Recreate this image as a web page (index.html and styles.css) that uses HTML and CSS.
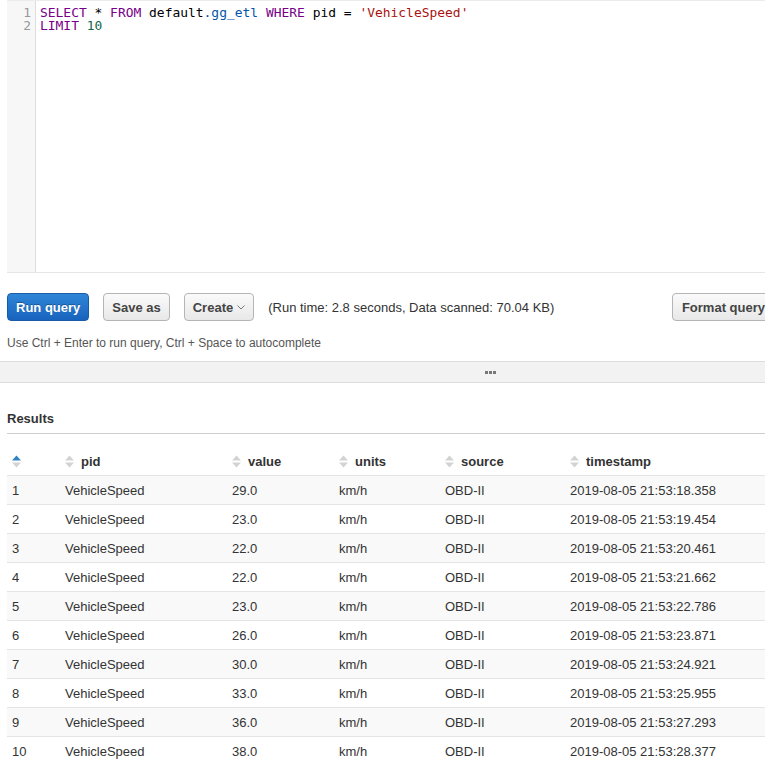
FILE: index.html
```html
<!DOCTYPE html>
<html>
<head>
<meta charset="utf-8">
<link rel="stylesheet" href="styles.css">
</head>
<body>
<div class="page">
  <div class="editor">
    <div class="gutter">
      <div class="ln">1</div>
      <div class="ln">2</div>
    </div>
    <div class="code">
      <div class="line"><span class="kw">SELECT</span> * <span class="kw">FROM</span> default<span class="var">.gg_etl</span> <span class="kw">WHERE</span> pid = <span class="str">'VehicleSpeed'</span></div>
      <div class="line"><span class="kw">LIMIT</span> <span class="num">10</span></div>
    </div>
  </div>

  <div class="toolbar">
    <button class="btn btn-primary">Run query</button>
    <button class="btn">Save as</button>
    <button class="btn">Create <svg class="chev" width="8" height="5" viewBox="0 0 8 5"><polyline points="0.5,0.5 4,4 7.5,0.5" fill="none" stroke="#777" stroke-width="1"/></svg></button>
    <span class="stats">(Run time: 2.8 seconds, Data scanned: 70.04 KB)</span>
    <button class="btn btn-format">Format query</button>
  </div>

  <div class="hint">Use Ctrl + Enter to run query, Ctrl + Space to autocomplete</div>
</div>

<div class="splitter"><svg class="dots" width="11" height="3" viewBox="0 0 11 3"><rect x="0" y="0" width="3" height="3" fill="#777"/><rect x="4" y="0" width="3" height="3" fill="#777"/><rect x="8" y="0" width="3" height="3" fill="#777"/></svg></div>

<div class="results">
  <div class="results-title">Results</div>
  <table class="grid">
    <thead>
      <tr>
        <th class="c-idx"><span class="sort"><svg width="9" height="13" viewBox="0 0 9 13"><polygon points="0,5.5 4.5,0.5 9,5.5" fill="#2f83c5"/><polygon points="0,7.5 4.5,12.5 9,7.5" fill="#d3d3d3"/></svg></span></th>
        <th class="c-pid"><span class="sort"><svg width="9" height="13" viewBox="0 0 9 13"><polygon points="0,5.5 4.5,0.5 9,5.5" fill="#d3d3d3"/><polygon points="0,7.5 4.5,12.5 9,7.5" fill="#d3d3d3"/></svg></span>pid</th>
        <th class="c-val"><span class="sort"><svg width="9" height="13" viewBox="0 0 9 13"><polygon points="0,5.5 4.5,0.5 9,5.5" fill="#d3d3d3"/><polygon points="0,7.5 4.5,12.5 9,7.5" fill="#d3d3d3"/></svg></span>value</th>
        <th class="c-units"><span class="sort"><svg width="9" height="13" viewBox="0 0 9 13"><polygon points="0,5.5 4.5,0.5 9,5.5" fill="#d3d3d3"/><polygon points="0,7.5 4.5,12.5 9,7.5" fill="#d3d3d3"/></svg></span>units</th>
        <th class="c-src"><span class="sort"><svg width="9" height="13" viewBox="0 0 9 13"><polygon points="0,5.5 4.5,0.5 9,5.5" fill="#d3d3d3"/><polygon points="0,7.5 4.5,12.5 9,7.5" fill="#d3d3d3"/></svg></span>source</th>
        <th class="c-ts"><span class="sort"><svg width="9" height="13" viewBox="0 0 9 13"><polygon points="0,5.5 4.5,0.5 9,5.5" fill="#d3d3d3"/><polygon points="0,7.5 4.5,12.5 9,7.5" fill="#d3d3d3"/></svg></span>timestamp</th>
      </tr>
    </thead>
    <tbody>
      <tr><td>1</td><td>VehicleSpeed</td><td>29.0</td><td>km/h</td><td>OBD-II</td><td>2019-08-05 21:53:18.358</td></tr>
      <tr><td>2</td><td>VehicleSpeed</td><td>23.0</td><td>km/h</td><td>OBD-II</td><td>2019-08-05 21:53:19.454</td></tr>
      <tr><td>3</td><td>VehicleSpeed</td><td>22.0</td><td>km/h</td><td>OBD-II</td><td>2019-08-05 21:53:20.461</td></tr>
      <tr><td>4</td><td>VehicleSpeed</td><td>22.0</td><td>km/h</td><td>OBD-II</td><td>2019-08-05 21:53:21.662</td></tr>
      <tr><td>5</td><td>VehicleSpeed</td><td>23.0</td><td>km/h</td><td>OBD-II</td><td>2019-08-05 21:53:22.786</td></tr>
      <tr><td>6</td><td>VehicleSpeed</td><td>26.0</td><td>km/h</td><td>OBD-II</td><td>2019-08-05 21:53:23.871</td></tr>
      <tr><td>7</td><td>VehicleSpeed</td><td>30.0</td><td>km/h</td><td>OBD-II</td><td>2019-08-05 21:53:24.921</td></tr>
      <tr><td>8</td><td>VehicleSpeed</td><td>33.0</td><td>km/h</td><td>OBD-II</td><td>2019-08-05 21:53:25.955</td></tr>
      <tr><td>9</td><td>VehicleSpeed</td><td>36.0</td><td>km/h</td><td>OBD-II</td><td>2019-08-05 21:53:27.293</td></tr>
      <tr><td>10</td><td>VehicleSpeed</td><td>38.0</td><td>km/h</td><td>OBD-II</td><td>2019-08-05 21:53:28.377</td></tr>
    </tbody>
  </table>
</div>
</body>
</html>
```
FILE: styles.css
```css
html, body {
  margin: 0;
  padding: 0;
  overflow: hidden;
  background: #fff;
}
body {
  font-family: "Liberation Sans", Arial, sans-serif;
  font-size: 13px;
  color: #333;
  width: 980px;
}
.page {
  padding-left: 7px;
  width: 768px;
}
.editor {
  display: flex;
  height: 271px;
  border-top: 1px solid #ececec;
  border-bottom: 1px solid #e6e6e6;
}
.gutter {
  width: 29px;
  flex: none;
  background: #f7f7f7;
  border-right: 1px solid #dddddd;
  padding-top: 5px;
  box-sizing: border-box;
  font-family: "DejaVu Sans Mono", monospace;
  font-size: 12.9px;
  line-height: 13px;
  color: #999;
  text-align: right;
}
.ln {
  padding-right: 4px;
}
.code {
  padding-top: 5px;
  padding-left: 4px;
  font-family: "DejaVu Sans Mono", monospace;
  font-size: 12.95px;
  line-height: 13px;
  color: #000;
}
.line {
  white-space: pre;
}
.kw { color: #770088; }
.var { color: #0055aa; }
.str { color: #aa1111; }
.num { color: #116644; }

.toolbar {
  display: flex;
  align-items: center;
  gap: 14px;
  margin-top: 20px;
  height: 28px;
}
.btn {
  font-family: "Liberation Sans", Arial, sans-serif;
  font-size: 13px;
  font-weight: bold;
  color: #444;
  height: 28px;
  padding: 0 8px;
  border: 1px solid #b5b5b5;
  border-radius: 4px;
  background: linear-gradient(#fafafa, #e8e8e8);
  display: inline-flex;
  align-items: center;
  gap: 4px;
  box-sizing: border-box;
  white-space: nowrap;
  flex: none;
}
.btn-primary {
  color: #fff;
  background: linear-gradient(#2e86d8, #1863bd);
  border-color: #175aa6;
  text-shadow: 0 -1px 0 rgba(0,0,0,0.3);
  padding: 0 8px;
}
.chev {
  margin-top: 1px;
}
.stats {
  color: #333;
  font-size: 13px;
  white-space: nowrap;
}
.btn-format {
  margin-left: auto;
  padding: 0 9px;
}
.hint {
  margin-top: 15px;
  font-size: 12px;
  color: #555;
  line-height: 14px;
}

.splitter {
  margin-top: 11px;
  height: 20px;
  background: #f2f2f2;
  border-top: 1px solid #dcdcdc;
  border-bottom: 1px solid #dcdcdc;
  display: flex;
  align-items: center;
  justify-content: center;
}
.dots {
  display: block;
}

.results {
  padding-left: 7px;
  width: 780px;
}
.results-title {
  font-weight: bold;
  font-size: 13px;
  color: #333;
  margin-top: 28px;
  line-height: 15px;
  padding-bottom: 7px;
  border-bottom: 1px solid #cfcfcf;
}
.grid {
  margin-top: 13px;
  border-collapse: collapse;
  width: 100%;
  table-layout: fixed;
}
.grid th, .grid td {
  text-align: left;
  padding: 0 0 0 5px;
  height: 28px;
  white-space: nowrap;
}
.grid th {
  font-weight: bold;
  color: #333;
  height: 28px;
}
.grid td {
  color: #333;
  border-top: 1px solid #e4e4e4;
}
.grid tbody tr:nth-child(odd) td {
  background: #f9f9f9;
}
.sort {
  display: inline-block;
  width: 9px;
  height: 13px;
  vertical-align: -2px;
  margin-right: 7px;
}
.sort svg { display: block; }
.c-idx { width: 48px; }
.c-pid { width: 162px; }
.c-val { width: 102px; }
.c-units { width: 101px; }
.c-src { width: 120px; }
.c-ts { width: auto; }
```
